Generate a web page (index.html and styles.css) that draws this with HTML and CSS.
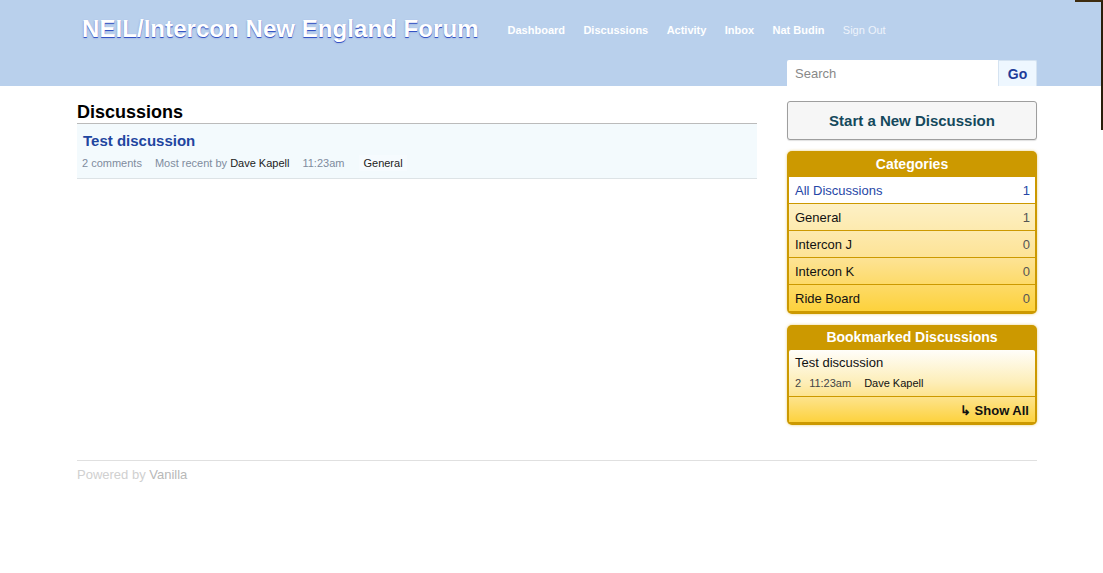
FILE: index.html
```html
<!DOCTYPE html>
<html>
<head>
<meta charset="utf-8">
<title>NEIL/Intercon New England Forum</title>
<link rel="stylesheet" href="styles.css">
</head>
<body>
<div class="edge"></div>
<header class="head">
  <div class="wrap">
    <div class="head-top">
      <a class="brand" href="#">NEIL/Intercon New England Forum</a>
      <nav class="nav">
        <a href="#">Dashboard</a>
        <a href="#">Discussions</a>
        <a href="#">Activity</a>
        <a href="#">Inbox</a>
        <a href="#">Nat Budin</a>
        <a href="#" class="signout">Sign Out</a>
      </nav>
    </div>
    <form class="search">
      <input class="search-input" type="text" placeholder="Search">
      <button class="search-go" type="button">Go</button>
    </form>
  </div>
</header>

<div class="wrap body">
  <main class="content">
    <h1 class="page-title">Discussions</h1>
    <ul class="discussions">
      <li class="disc">
        <a class="disc-title" href="#">Test discussion</a>
        <div class="meta">
          <span class="m-gray">2 comments</span>
          <span class="m-gray">Most recent by <span class="m-dark">Dave Kapell</span></span>
          <span class="m-gray">11:23am</span>
          <span class="m-cat">General</span>
        </div>
      </li>
    </ul>
  </main>

  <aside class="panel">
    <a class="new-btn" href="#">Start a New Discussion</a>

    <div class="box">
      <div class="box-head">Categories</div>
      <ul class="cats">
        <li class="cat active"><span>All Discussions</span><span class="count">1</span></li>
        <li class="cat"><span>General</span><span class="count">1</span></li>
        <li class="cat"><span>Intercon J</span><span class="count">0</span></li>
        <li class="cat"><span>Intercon K</span><span class="count">0</span></li>
        <li class="cat"><span>Ride Board</span><span class="count">0</span></li>
      </ul>
    </div>

    <div class="box">
      <div class="box-head">Bookmarked Discussions</div>
      <div class="bm">
        <div class="bm-item">
          <div class="bm-title">Test discussion</div>
          <div class="bm-meta"><span>2</span><span>11:23am</span><span class="bm-user">Dave Kapell</span></div>
        </div>
        <div class="bm-all">↳ Show All</div>
      </div>
    </div>
  </aside>
</div>

<footer class="wrap foot">
  <div class="foot-text">Powered by <span class="vanilla">Vanilla</span></div>
</footer>
</body>
</html>
```

FILE: styles.css
```css
* { box-sizing: border-box; }
html, body { margin: 0; padding: 0; }
body {
  font-family: "Liberation Sans", Arial, sans-serif;
  background: #fff;
  color: #000;
}
a { text-decoration: none; }
ul { list-style: none; margin: 0; padding: 0; }

.edge {
  position: absolute;
  top: 0;
  right: 0;
  width: 28px;
  height: 130px;
  border-top: 2px solid #3e2c10;
  border-right: 2px solid #2a1e0c;
}

.wrap { width: 960px; margin-left: 77px; }

.head { background: #b9d0ec; padding-top: 15px; }
.head-top { display: flex; align-items: flex-start; padding-left: 5px; }
.brand {
  font-size: 24px;
  line-height: 28px;
  font-weight: bold;
  letter-spacing: 0.06px;
  color: #fff;
  text-shadow: 0 1px 0 #3553c4, 0 1px 2px rgba(30, 50, 170, 0.35);
}
.nav { display: flex; gap: 18.4px; margin-left: 29px; margin-top: 8px; }
.nav a {
  font-size: 11px;
  line-height: 14px;
  font-weight: bold;
  color: #fff;
}
.nav a.signout { font-weight: normal; color: #eef3fb; }

.search { display: flex; justify-content: flex-end; margin-top: 17px; }
.search-input {
  width: 211px;
  height: 26px;
  border: 0;
  border-radius: 2px 0 0 0;
  padding: 0 8px;
  font-family: "Liberation Sans", Arial, sans-serif;
  font-size: 13px;
  background: #fff;
  outline: none;
}
.search-input::placeholder { color: #888; }
.search-go {
  width: 39px;
  height: 26px;
  border: 1px solid #d5e3f1;
  border-bottom: 0;
  border-radius: 0 2px 0 0;
  background: #eef7ff;
  color: #1f3c99;
  font-family: "Liberation Sans", Arial, sans-serif;
  font-size: 14px;
  font-weight: bold;
  padding: 0;
}

.body { display: flex; gap: 30px; align-items: flex-start; padding-top: 14px; }
.content { width: 680px; padding-top: 1px; }
.page-title {
  margin: 0;
  font-size: 18px;
  line-height: 22px;
  font-weight: bold;
  padding-bottom: 0;
  border-bottom: 1px solid #bbb;
}
.disc {
  background: #f3fafd;
  border-bottom: 1px solid #dde3e6;
  padding: 7px 5px 7px 5px;
}
.disc-title {
  display: block;
  padding-left: 1px;
  font-size: 15px;
  line-height: 20px;
  font-weight: bold;
  color: #1f46a0;
}
.meta {
  display: flex;
  gap: 13px;
  margin-top: 4px;
  font-size: 11px;
  line-height: 16px;
}
.m-gray { color: #7f8c9d; }
.m-dark { color: #222; }
.m-cat { color: #222; background: #f6fbfe; padding: 0 4px; margin-left: 2px; }

.panel { width: 250px; padding-top: 1px; }
.new-btn {
  display: block;
  height: 39px;
  line-height: 37px;
  text-align: center;
  background: #f6f6f6;
  border: 1px solid #9e9e9e;
  border-radius: 3px;
  box-shadow: 0 1px 1px rgba(0, 0, 0, 0.12);
  color: #14495c;
  font-size: 15px;
  font-weight: bold;
}

.box {
  margin-top: 11px;
  background: #cc9900;
  border-radius: 5px;
  padding: 0 2px 3px;
  box-shadow: 0 0 3px rgba(215, 165, 20, 0.55);
}
.box-head {
  height: 26px;
  line-height: 26px;
  text-align: center;
  color: #fff;
  font-size: 14px;
  font-weight: bold;
}
.cats {
  background: linear-gradient(#fff7dd 0%, #fdefc0 25%, #fde396 60%, #fdd23c 100%);
}
.cat {
  display: flex;
  justify-content: space-between;
  height: 27px;
  line-height: 26px;
  padding: 1px 5px 0 6px;
  border-bottom: 1px solid #cc9900;
  font-size: 13px;
  color: #111;
}
.cat:last-child { height: 26px; border-bottom: 0; }
.cat .count { color: #555; }
.cat.active { background: #fff; color: #2646a6; }
.cat.active .count { color: #2646a6; }

.box + .box .box-head { line-height: 24px; height: 25px; }
.bm {
  background: linear-gradient(#fffefa 0%, #fdeeb8 45%, #fde594 62%, #fdd23e 100%);
  border-radius: 2px 2px 0 0;
}
.bm-item { padding: 4px 6px 0 6px; height: 47px; border-bottom: 1px solid #cc9900; }
.bm-title { font-size: 13px; line-height: 18px; color: #111; }
.bm-meta {
  display: flex;
  gap: 8px;
  font-size: 11px;
  line-height: 16px;
  margin-top: 3px;
  color: #444;
}
.bm-meta span:nth-child(2) { margin-right: 5px; }
.bm-user { color: #111; }
.bm-all {
  height: 25px;
  line-height: 25px;
  padding-top: 1px;
  text-align: right;
  padding-right: 6px;
  font-size: 13px;
  font-weight: bold;
  color: #111;
}

.foot {
  margin-top: 35px;
  border-top: 1px solid #e0e0e0;
  padding-top: 6px;
}
.foot-text { font-size: 13px; line-height: 16px; color: #d0d0d0; }
.vanilla { color: #b8b8b8; }
```
